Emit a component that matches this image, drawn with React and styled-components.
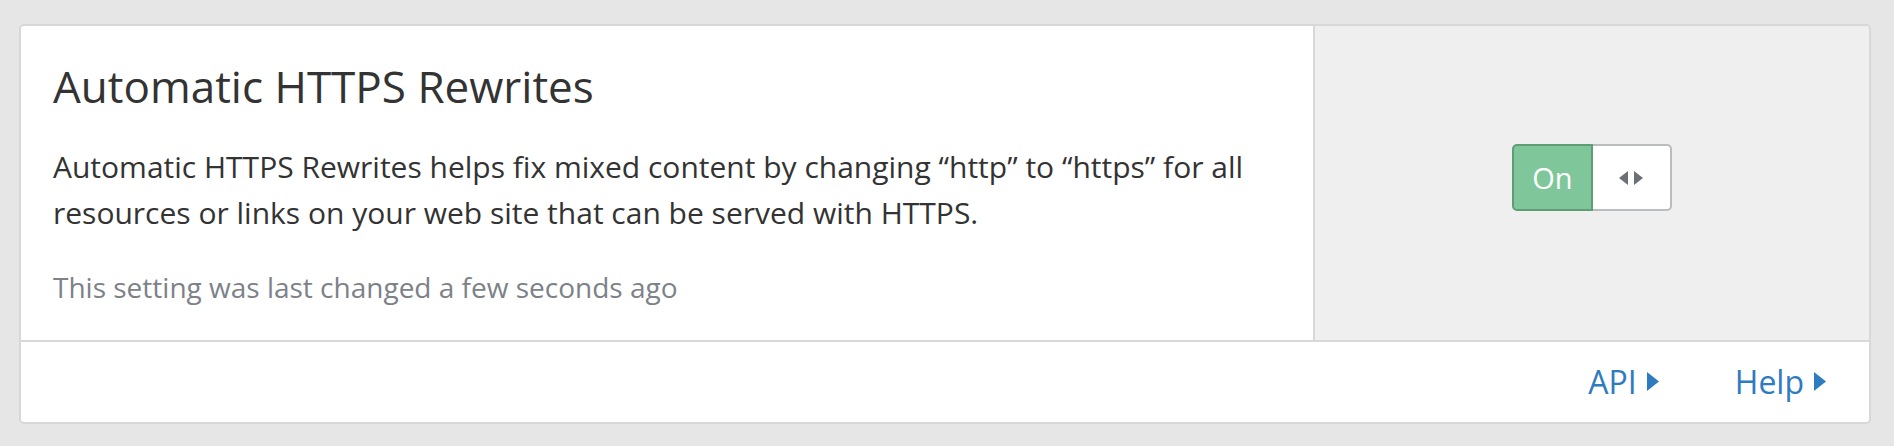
import React from "react";
import styled, { createGlobalStyle } from "styled-components";

const GlobalStyle = createGlobalStyle`
  html, body {
    margin: 0;
    padding: 0;
    background: #e6e6e6;
  }
  body {
    font-family: "Open Sans", "Noto Sans", sans-serif;
    color: #333333;
  }
`;

const Page = styled.div`
  padding: 24px 23px 22px 19px;
`;

const Card = styled.div`
  background: #ffffff;
  border: 2px solid #d8d8d8;
  border-radius: 5px;
  overflow: hidden;
`;

const Body = styled.div`
  display: flex;
  height: 314px;
  border-bottom: 2px solid #d8d8d8;
`;

const Main = styled.div`
  width: 70%;
  box-sizing: border-box;
  padding: 35px 32px 0 32px;
  border-right: 2px solid #d8d8d8;
`;

const Title = styled.h3`
  margin: 0;
  font-size: 44px;
  font-weight: 400;
  line-height: 50px;
  color: #333333;
`;

const Description = styled.p`
  margin: 33px 0 0;
  font-size: 30px;
  line-height: 46px;
  color: #333333;
  max-width: 1220px;
`;

const Note = styled.p`
  margin: 28px 0 0;
  font-size: 28px;
  line-height: 46px;
  color: #7c8288;
`;

const Side = styled.div`
  flex: 1;
  background: #efefef;
  display: flex;
  align-items: center;
  justify-content: center;
  padding-bottom: 11px;
`;

const Toggle = styled.div`
  display: flex;
  height: 67px;
  box-sizing: border-box;
`;

const ToggleOn = styled.div`
  width: 81px;
  box-sizing: border-box;
  background: #7fc79a;
  border: 2px solid #5f9e75;
  border-radius: 5px 0 0 5px;
  color: #ffffff;
  font-size: 29px;
  display: flex;
  align-items: center;
  justify-content: center;
`;

const ToggleHandle = styled.div`
  width: 79px;
  box-sizing: border-box;
  background: #ffffff;
  border: 2px solid #babdc0;
  border-left: none;
  border-radius: 0 5px 5px 0;
  display: flex;
  align-items: center;
  justify-content: center;
`;

const Footer = styled.div`
  height: 80px;
  display: flex;
  align-items: center;
  justify-content: flex-end;
  gap: 76px;
  padding-right: 43px;
`;

const FooterLink = styled.a`
  display: flex;
  align-items: center;
  gap: 10px;
  color: #2f7bbf;
  font-size: 32px;
  text-decoration: none;
  padding-bottom: 1px;
`;

const Caret = () => (
  <svg width="12" height="19" viewBox="0 0 12 19">
    <path d="M0 0 L12 9.5 L0 19 Z" fill="#2f7bbf" />
  </svg>
);

const Arrows = () => (
  <svg width="24" height="14" viewBox="0 0 24 14">
    <path d="M9 0 L0 7 L9 14 Z" fill="#6c7074" />
    <path d="M15 0 L24 7 L15 14 Z" fill="#6c7074" />
  </svg>
);

const App = () => (
  <Page>
    <GlobalStyle />
    <Card>
      <Body>
        <Main>
          <Title>Automatic HTTPS Rewrites</Title>
          <Description>
            Automatic HTTPS Rewrites helps fix mixed content by changing “http”
            to “https” for all resources or links on your web site that can be
            served with HTTPS.
          </Description>
          <Note>This setting was last changed a few seconds ago</Note>
        </Main>
        <Side>
          <Toggle>
            <ToggleOn>On</ToggleOn>
            <ToggleHandle>
              <Arrows />
            </ToggleHandle>
          </Toggle>
        </Side>
      </Body>
      <Footer>
        <FooterLink href="#">
          API <Caret />
        </FooterLink>
        <FooterLink href="#">
          Help <Caret />
        </FooterLink>
      </Footer>
    </Card>
  </Page>
);

export default App;
